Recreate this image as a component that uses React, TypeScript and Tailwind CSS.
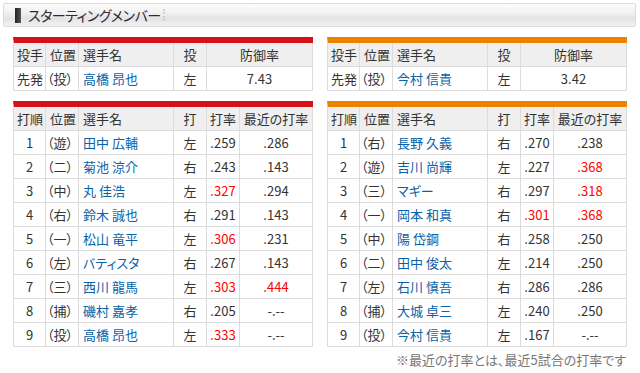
type Batter = {
  order: number;
  pos: string;
  name: string;
  hand: string;
  avg: string;
  avgHot?: boolean;
  recent: string;
  recentHot?: boolean;
};

type Team = {
  color: string;
  pitcher: { pos: string; name: string; hand: string; era: string };
  batters: Batter[];
};

const carp: Team = {
  color: 'border-[#d7101c]',
  pitcher: { pos: '（投）', name: '高橋 昂也', hand: '左', era: '7.43' },
  batters: [
    { order: 1, pos: '（遊）', name: '田中 広輔', hand: '左', avg: '.259', recent: '.286' },
    { order: 2, pos: '（二）', name: '菊池 涼介', hand: '右', avg: '.243', recent: '.143' },
    { order: 3, pos: '（中）', name: '丸 佳浩', hand: '左', avg: '.327', avgHot: true, recent: '.294' },
    { order: 4, pos: '（右）', name: '鈴木 誠也', hand: '右', avg: '.291', recent: '.143' },
    { order: 5, pos: '（一）', name: '松山 竜平', hand: '左', avg: '.306', avgHot: true, recent: '.231' },
    { order: 6, pos: '（左）', name: 'バティスタ', hand: '右', avg: '.267', recent: '.143' },
    { order: 7, pos: '（三）', name: '西川 龍馬', hand: '左', avg: '.303', avgHot: true, recent: '.444', recentHot: true },
    { order: 8, pos: '（捕）', name: '磯村 嘉孝', hand: '右', avg: '.205', recent: '-.--' },
    { order: 9, pos: '（投）', name: '高橋 昂也', hand: '左', avg: '.333', avgHot: true, recent: '-.--' },
  ],
};

const giants: Team = {
  color: 'border-[#ef8200]',
  pitcher: { pos: '（投）', name: '今村 信貴', hand: '左', era: '3.42' },
  batters: [
    { order: 1, pos: '（右）', name: '長野 久義', hand: '右', avg: '.270', recent: '.238' },
    { order: 2, pos: '（遊）', name: '吉川 尚輝', hand: '左', avg: '.227', recent: '.368', recentHot: true },
    { order: 3, pos: '（三）', name: 'マギー', hand: '右', avg: '.297', recent: '.318', recentHot: true },
    { order: 4, pos: '（一）', name: '岡本 和真', hand: '右', avg: '.301', avgHot: true, recent: '.368', recentHot: true },
    { order: 5, pos: '（中）', name: '陽 岱鋼', hand: '右', avg: '.258', recent: '.250' },
    { order: 6, pos: '（二）', name: '田中 俊太', hand: '左', avg: '.214', recent: '.250' },
    { order: 7, pos: '（左）', name: '石川 慎吾', hand: '右', avg: '.286', recent: '.286' },
    { order: 8, pos: '（捕）', name: '大城 卓三', hand: '左', avg: '.240', recent: '.250' },
    { order: 9, pos: '（投）', name: '今村 信貴', hand: '左', avg: '.167', recent: '-.--' },
  ],
};

const cell = 'h-[24px] border-r border-b border-[#dcdcdc] flex items-center whitespace-nowrap';

function PitcherTable({ team }: { team: Team }) {
  const p = team.pitcher;
  return (
    <div className={`border-t-[6px] ${team.color} border-l border-l-[#dcdcdc]`}>
      <div className="grid grid-cols-[32px_33px_95px_33px_106px] bg-[#efefef]">
        <div className={`${cell} pl-[3px]`}>投手</div>
        <div className={`${cell} pl-[4px]`}>位置</div>
        <div className={`${cell} pl-[4px]`}>選手名</div>
        <div className={`${cell} justify-center`}>投</div>
        <div className={`${cell} justify-center`}>防御率</div>
      </div>
      <div className="grid grid-cols-[32px_33px_95px_33px_106px] bg-white">
        <div className={`${cell} pl-[3px]`}>先発</div>
        <div className={`${cell} pl-px`}>{p.pos}</div>
        <div className={`${cell} pl-[4px] text-[#0a62a8]`}>{p.name}</div>
        <div className={`${cell} justify-center`}>{p.hand}</div>
        <div className={`${cell} justify-center`}>{p.era}</div>
      </div>
    </div>
  );
}

function BattingTable({ team }: { team: Team }) {
  return (
    <div className={`border-t-[6px] ${team.color} border-l border-l-[#dcdcdc]`}>
      <div className="grid grid-cols-[32px_33px_95px_33px_33px_73px] bg-[#efefef]">
        <div className={`${cell} pl-[3px]`}>打順</div>
        <div className={`${cell} pl-[4px]`}>位置</div>
        <div className={`${cell} pl-[4px]`}>選手名</div>
        <div className={`${cell} justify-center`}>打</div>
        <div className={`${cell} justify-center`}>打率</div>
        <div className={`${cell} justify-center`}>最近の打率</div>
      </div>
      {team.batters.map((b) => (
        <div key={b.order} className="grid grid-cols-[32px_33px_95px_33px_33px_73px] bg-white">
          <div className={`${cell} justify-center`}>{b.order}</div>
          <div className={`${cell} pl-px`}>{b.pos}</div>
          <div className={`${cell} pl-[4px] text-[#0a62a8]`}>{b.name}</div>
          <div className={`${cell} justify-center`}>{b.hand}</div>
          <div className={`${cell} justify-center ${b.avgHot ? 'text-[#ff0000]' : ''}`}>{b.avg}</div>
          <div className={`${cell} justify-center ${b.recentHot ? 'text-[#ff0000]' : ''}`}>{b.recent}</div>
        </div>
      ))}
    </div>
  );
}

export default function App() {
  return (
    <div className="w-[640px] h-[373px] bg-white pt-[3px] text-[13px] text-[#333] font-['Noto_Sans_CJK_JP',sans-serif] [font-feature-settings:'palt'] leading-none">
      {/* Section heading */}
      <div className="ml-[3px] mr-[4px] h-[24px] rounded-[2px] border border-[#dcdcdc] bg-[linear-gradient(#fbfbfb,#f1f1f1_40%,#e3e3e3_65%,#f2f2f2)] flex items-center">
        <div className="ml-[11px] w-[6px] h-[15px] bg-[linear-gradient(90deg,#222,#555)]" />
        <h2 className="ml-[7px] text-[14px] text-[#2e2a3a] tracking-[-0.5px]">スターティングメンバー</h2>
        <div className="ml-[2px] h-[12px] border-l-2 border-dotted border-[#cfcfcf]" />
      </div>

      <div className="mt-[10px] px-[13px] grid grid-cols-2 gap-x-[14px]">
        <PitcherTable team={carp} />
        <PitcherTable team={giants} />
      </div>

      <div className="mt-[10px] px-[13px] grid grid-cols-2 gap-x-[14px]">
        <BattingTable team={carp} />
        <BattingTable team={giants} />
      </div>

      <p className="mt-[6px] pr-[14px] text-right text-[13px] text-[#777]">
        ※最近の打率とは、最近5試合の打率です
      </p>
    </div>
  );
}
